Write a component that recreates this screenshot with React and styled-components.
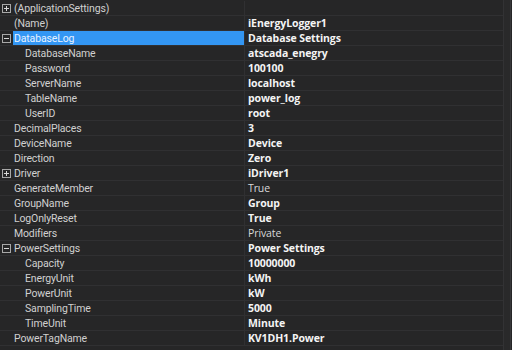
import React from "react";
import styled, { createGlobalStyle } from "styled-components";

const Global = createGlobalStyle`
  html, body { margin: 0; padding: 0; background: #262627; }
  body { width: 512px; height: 350px; overflow: hidden; }
`;

const Grid = styled.div`
  width: 512px;
  height: 350px;
  background: #262627;
  display: flex;
  font-family: "Open Sans", "Noto Sans", sans-serif;
  font-size: 10.5px;
  color: #d4d4d4;
  overflow: hidden;
`;

const Rows = styled.div`
  flex: 1;
  display: flex;
  flex-direction: column;
  padding-top: 1px;
`;

const RightEdge = styled.div`
  width: 6px;
  border-left: 1px solid #323234;
  border-right: 1px solid #38383a;
  background: #29292a;
  margin-right: 1px;
`;

const Row = styled.div`
  display: grid;
  grid-template-columns: 13px 232px 1fr;
  height: 14px;
  border-bottom: 1px solid #303032;
  line-height: 15px;
`;

const Gutter = styled.div`
  display: flex;
  align-items: center;
  justify-content: center;
  padding-right: 1px;
`;

const Toggle = styled.span`
  box-sizing: border-box;
  width: 9px;
  height: 9px;
  border: 1px solid #a8a8a8;
  position: relative;
  &::before {
    content: "";
    position: absolute;
    left: 1px;
    right: 1px;
    top: 3px;
    height: 1px;
    background: #d8d8d8;
  }
  &::after {
    content: "";
    display: ${(p) => (p.$open ? "none" : "block")};
    position: absolute;
    top: 1px;
    bottom: 1px;
    left: 3px;
    width: 1px;
    background: #d8d8d8;
  }
`;

const Name = styled.div`
  padding-left: ${(p) => (p.$nested ? 12 : 1)}px;
  font-family: Roboto, "Open Sans", sans-serif;
  font-size: 10.5px;
  letter-spacing: -0.15px;
  background: ${(p) => (p.$selected ? "#3396f3" : "transparent")};
  color: ${(p) => (p.$selected ? "#e8f2ff" : "#d0d0d0")};
  border-right: 1px solid #303032;
  white-space: nowrap;
  overflow: hidden;
`;

const Value = styled.div`
  padding-left: 3px;
  font-weight: ${(p) => (p.$bold ? 700 : 400)};
  color: ${(p) => (p.$bold ? "#f4f4f4" : "#d8d8d8")};
  letter-spacing: -0.1px;
  white-space: nowrap;
  overflow: hidden;
`;

const data = [
  { name: "(ApplicationSettings)", toggle: "closed" },
  { name: "(Name)", value: "iEnergyLogger1", bold: true },
  { name: "DatabaseLog", toggle: "open", value: "Database Settings", bold: true, selected: true },
  { name: "DatabaseName", nested: true, value: "atscada_enegry", bold: true },
  { name: "Password", nested: true, value: "100100", bold: true },
  { name: "ServerName", nested: true, value: "localhost", bold: true },
  { name: "TableName", nested: true, value: "power_log", bold: true },
  { name: "UserID", nested: true, value: "root", bold: true },
  { name: "DecimalPlaces", value: "3", bold: true },
  { name: "DeviceName", value: "Device", bold: true },
  { name: "Direction", value: "Zero", bold: true },
  { name: "Driver", toggle: "closed", value: "iDriver1", bold: true },
  { name: "GenerateMember", value: "True" },
  { name: "GroupName", value: "Group", bold: true },
  { name: "LogOnlyReset", value: "True", bold: true },
  { name: "Modifiers", value: "Private" },
  { name: "PowerSettings", toggle: "open", value: "Power Settings", bold: true },
  { name: "Capacity", nested: true, value: "10000000", bold: true },
  { name: "EnergyUnit", nested: true, value: "kWh", bold: true },
  { name: "PowerUnit", nested: true, value: "kW", bold: true },
  { name: "SamplingTime", nested: true, value: "5000", bold: true },
  { name: "TimeUnit", nested: true, value: "Minute", bold: true },
  { name: "PowerTagName", value: "KV1DH1.Power", bold: true },
];

export default function App() {
  return (
    <>
      <Global />
      <Grid>
        <Rows>
          {data.map((r) => (
            <Row key={r.name}>
              <Gutter>{r.toggle && <Toggle $open={r.toggle === "open"} />}</Gutter>
              <Name $nested={r.nested} $selected={r.selected}>{r.name}</Name>
              <Value $bold={r.bold}>{r.value}</Value>
            </Row>
          ))}
        </Rows>
        <RightEdge />
      </Grid>
    </>
  );
}
